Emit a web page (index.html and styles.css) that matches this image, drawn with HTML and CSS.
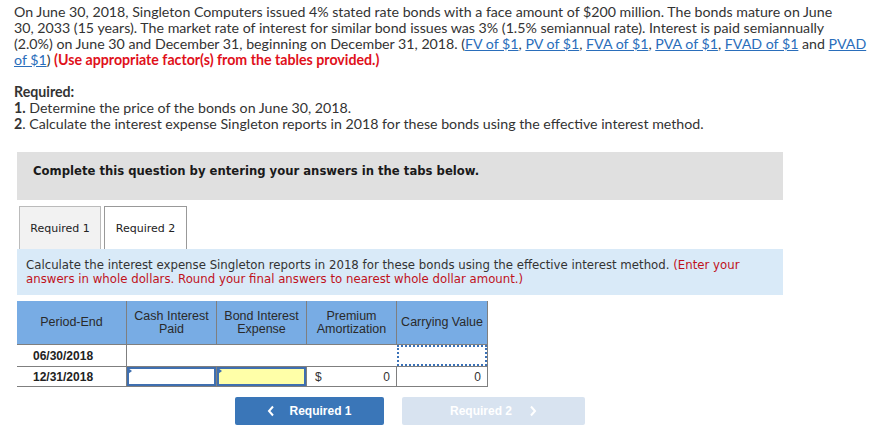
FILE: index.html
```html
<!DOCTYPE html>
<html>
<head>
<meta charset="utf-8">
<link rel="stylesheet" href="styles.css">
</head>
<body>
<div class="page">
  <p class="intro">On June 30, 2018, Singleton Computers issued 4% stated rate bonds with a face amount of $200 million. The bonds mature on June<br>30, 2033 (15 years). The market rate of interest for similar bond issues was 3% (1.5% semiannual rate). Interest is paid semiannually<br>(2.0%) on June 30 and December 31, beginning on December 31, 2018. (<a href="#">FV of $1</a>, <a href="#">PV of $1</a>, <a href="#">FVA of $1</a>, <a href="#">PVA of $1</a>, <a href="#">FVAD of $1</a> and <a href="#">PVAD<br>of $1</a>) <span class="warn">(Use appropriate factor(s) from the tables provided.)</span></p>

  <div class="required">
    <div class="req-title">Required:</div>
    <div><b>1.</b> Determine the price of the bonds on June 30, 2018.</div>
    <div><b>2</b>. Calculate the interest expense Singleton reports in 2018 for these bonds using the effective interest method.</div>
  </div>

  <div class="instruction">Complete this question by entering your answers in the tabs below.</div>

  <div class="tabs">
    <div class="tab tab-inactive">Required 1</div>
    <div class="tab tab-active">Required 2</div>
  </div>

  <div class="prompt">Calculate the interest expense Singleton reports in 2018 for these bonds using the effective interest method. <span class="prompt-red">(Enter your answers in whole dollars. Round your final answers to nearest whole dollar amount.)</span></div>

  <table class="grid">
    <thead>
      <tr>
        <th class="c1">Period-End</th>
        <th class="c2">Cash Interest<br>Paid</th>
        <th class="c3">Bond Interest<br>Expense</th>
        <th class="c4">Premium<br>Amortization</th>
        <th class="c5">Carrying Value</th>
      </tr>
    </thead>
    <tbody>
      <tr class="row1">
        <td class="date">06/30/2018</td>
        <td class="blank left"></td>
        <td class="blank"></td>
        <td class="blank"></td>
        <td class="blank"><div class="dotted"></div></td>
      </tr>
      <tr class="row2">
        <td class="date">12/31/2018</td>
        <td class="inp"><div class="box white"><span class="flag"></span></div></td>
        <td class="inp"><div class="box yellow"><span class="flag"></span></div></td>
        <td class="val"><span class="cur">$</span><span>0</span></td>
        <td class="val"><span>0</span></td>
      </tr>
    </tbody>
  </table>

  <div class="nav">
    <button class="btn btn-prev"><svg class="chev" width="8" height="12" viewBox="0 0 8 12"><path d="M6 1.5 L2 6 L6 10.5" fill="none" stroke="#ffffff" stroke-width="2"/></svg>Required 1</button>
    <button class="btn btn-next">Required 2<svg class="chev" width="8" height="12" viewBox="0 0 8 12"><path d="M2 1.5 L6 6 L2 10.5" fill="none" stroke="#ffffff" stroke-width="2"/></svg></button>
  </div>
</div>
</body>
</html>
```

FILE: styles.css
```css
html, body {
  margin: 0;
  padding: 0;
  background: #ffffff;
}

.page {
  padding: 4px 0 0 14px;
  width: 850px;
}

.intro {
  margin: 0;
  font-family: "Lato", "Open Sans", sans-serif;
  font-size: 14.2px;
  line-height: 16px;
  color: #333333;
  width: 862px;
}

.intro a {
  color: #2a6ebb;
  text-decoration: underline;
}

.warn {
  color: #e0101a;
  font-weight: bold;
}

.required {
  margin-top: 16px;
  font-family: "Lato", "Open Sans", sans-serif;
  font-size: 14.2px;
  line-height: 16px;
  color: #333333;
}

.req-title {
  font-weight: bold;
}

.instruction {
  margin: 20px 0 0 3px;
  width: 766px;
  height: 48px;
  box-sizing: border-box;
  padding: 12px 16px 0 16px;
  background: #e0e0e0;
  font-family: "DejaVu Sans", Verdana, sans-serif;
  font-weight: bold;
  font-size: 11.65px;
  line-height: 14px;
  color: #1a1a1a;
}

.tabs {
  display: flex;
  gap: 3px;
  margin: 6px 0 0 5px;
}

.tab {
  height: 43px;
  box-sizing: border-box;
  border: 1px solid #999999;
  border-bottom: none;
  display: flex;
  align-items: center;
  justify-content: center;
  font-family: "DejaVu Sans", Verdana, sans-serif;
  font-size: 11px;
  color: #222222;
}

.tab-inactive {
  width: 82px;
  background: #f2f2f2;
  border-color: #bbbbbb;
}

.tab-active {
  width: 83px;
  background: #ffffff;
}

.prompt {
  margin-left: 3px;
  width: 766px;
  height: 46px;
  box-sizing: border-box;
  padding: 9px 9px 0 9px;
  background: #d9eaf8;
  font-family: "DejaVu Sans", Verdana, sans-serif;
  font-size: 11.75px;
  line-height: 14px;
  color: #333333;
}

.prompt-red {
  color: #c0121c;
}

.grid {
  margin: 6px 0 0 3px;
  border-collapse: collapse;
  font-family: "Liberation Sans", Arial, sans-serif;
  font-size: 12px;
  color: #333333;
}

.grid th {
  background: #78ace4;
  font-weight: normal;
  font-size: 12.5px;
  height: 43px;
  padding: 0;
  line-height: 13px;
  border-left: 1px solid #7f7f7f;
  border-bottom: 1px solid #7f7f7f;
  vertical-align: middle;
  color: #2a2a2a;
}

.grid th.c1 {
  border-left: none;
  width: 109px;
}

.grid th.c2, .grid th.c3, .grid th.c4 {
  width: 89px;
}

.grid th.c5 {
  width: 90px;
  border-right: 1px solid #7f7f7f;
}

.grid td {
  padding: 0;
  border-bottom: 1px solid #7f7f7f;
}

.row1 td {
  height: 20px;
}

.row2 td {
  height: 19px;
  border-left: 1px solid #7f7f7f;
}

.row2 td:last-child, .row1 td:last-child {
  border-right: 1px solid #7f7f7f;
}

.grid td.date {
  text-align: left;
  padding-left: 16px;
  font-weight: bold;
  color: #222222;
  border-left: none;
}

.row1 td.left {
  border-left: 1px solid #7f7f7f;
}

.dotted {
  height: 17px;
  border: 2px dotted #3a72b8;
}

.box {
  height: 15px;
  border: 2px solid #3f6fb0;
  position: relative;
}

.white {
  background: #ffffff;
}

.yellow {
  background: #ffffa8;
}

.flag {
  position: absolute;
  left: -1px;
  top: -1px;
  width: 0;
  height: 0;
  border-top: 3px solid transparent;
  border-bottom: 3px solid transparent;
  border-left: 4px solid #3f6fb0;
}

.grid td.val {
  padding: 0 6px 0 8px;
  text-align: right;
  white-space: nowrap;
}

.cur {
  float: left;
}

.nav {
  display: flex;
  gap: 18px;
  margin: 10px 0 0 221px;
}

.btn {
  height: 28px;
  border: none;
  border-radius: 2px;
  color: #ffffff;
  font-family: "Liberation Sans", Arial, sans-serif;
  font-weight: bold;
  font-size: 12px;
  padding: 0;
  display: flex;
  align-items: center;
  justify-content: center;
  gap: 14px;
}

.btn-prev {
  width: 149px;
  background: #3a76b8;
}

.btn-next {
  width: 183px;
  background: #d8e3f0;
  gap: 17px;
}

.chev {
  display: block;
}
```
